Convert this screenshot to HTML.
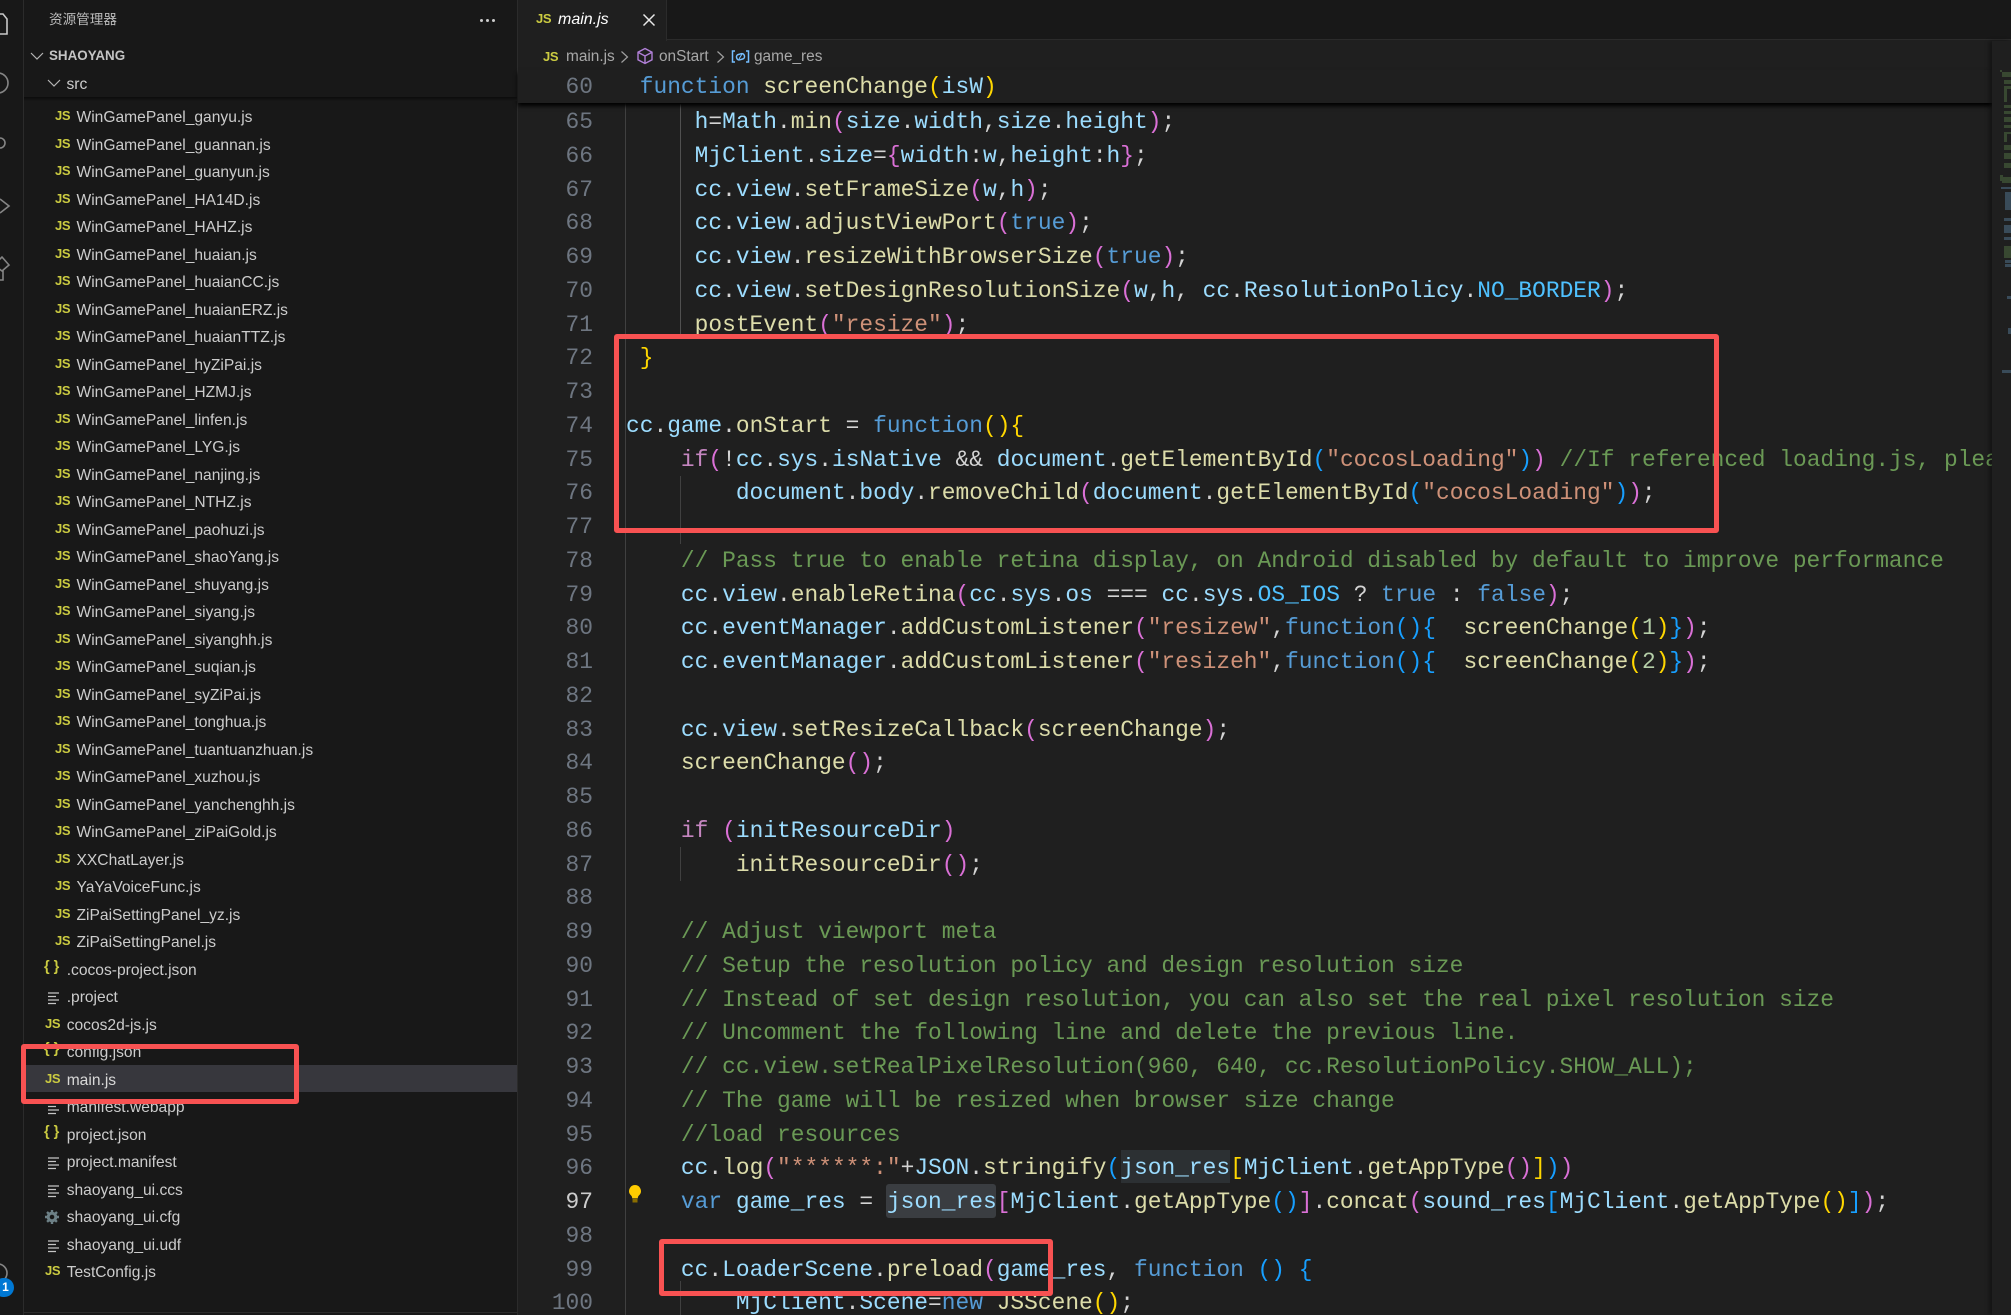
<!DOCTYPE html>
<html><head><meta charset="utf-8"><style>
*{box-sizing:border-box}
html,body{margin:0;padding:0;background:#1f1f1f}
#r{position:relative;width:2011px;height:1315px;overflow:hidden;background:#1f1f1f;font-family:"Liberation Sans","Noto Sans CJK SC",sans-serif}
.a{position:absolute}
#act{left:0;top:0;width:24px;height:1315px;background:#181818;border-right:1px solid #2b2b2b}
#side{left:24px;top:0;width:494px;height:1315px;background:#181818;border-right:1px solid #2b2b2b;overflow:hidden}
#list{left:0;top:97px;width:493px;height:1215px;overflow:hidden}
#rows{position:absolute;left:0;top:-20.2px;width:100%}
.w{position:relative;height:27.5px;line-height:27.5px;font-size:15.6px;color:#cccccc;white-space:pre;padding-left:52.5px}
.w.t{padding-left:42.7px}
.w b{position:absolute;left:31px;top:-2px;font-size:13px;color:#cbcb41;font-weight:bold;letter-spacing:-.3px}
.w.t b{left:21px}
.w.t b.br{left:20px;top:-3px;font-size:14.5px;letter-spacing:0}
.w svg{position:absolute;left:23px;top:6px}
#sel{left:0;top:1065px;width:493px;height:27px;background:#37373d}
#code{left:626px;top:106px;width:1366px;height:1209px;overflow:hidden;font-family:"Liberation Mono",monospace;font-size:22.88px;line-height:33.75px;color:#d4d4d4}
#code div{height:33.75px;white-space:pre}
#nums{left:540px;top:106px;width:53px;font-family:"Liberation Mono",monospace;font-size:22.88px;line-height:33.75px;color:#6e7681;text-align:right}
#nums div{height:33.75px}
.v{color:#9cdcfe}.f{color:#dcdcaa}.k{color:#569cd6}.c{color:#c586c0}.s{color:#ce9178}.g{color:#6a9955}.y{color:#ffd700}.p{color:#da70d6}.b{color:#179fff}.n{color:#4fc1ff}.m{color:#b5cea8}
.gd{position:absolute;width:1px;background:#404040}
.box{position:absolute;border:5px solid #f85252;border-radius:3px}
</style></head><body><div id="r">

<div id="side" class="a">
<div class="a" id="sel" style="left:0"></div>
<div class="a" style="left:25px;top:10px;font-size:13.6px;line-height:20px;color:#bbbbbb">资源管理器</div>
<div class="a" style="left:456px;top:19px;width:3px;height:3px;border-radius:2px;background:#ccc;box-shadow:6px 0 0 #ccc,12px 0 0 #ccc"></div>
<svg class="a" style="left:5px;top:48px" width="16" height="16" viewBox="0 0 16 16"><path d="M2 5l6 6 6-6" fill="none" stroke="#b5b5b5" stroke-width="1.2"/></svg>
<div class="a" style="left:25px;top:46px;font-size:13.4px;line-height:20px;font-weight:bold;color:#c4c4c4">SHAOYANG</div>
<svg class="a" style="left:22px;top:75px" width="16" height="16" viewBox="0 0 16 16"><path d="M2 5l6 6 6-6" fill="none" stroke="#b5b5b5" stroke-width="1.2"/></svg>
<div class="a" style="left:42.5px;top:74px;font-size:15.6px;line-height:22px;color:#cccccc">src</div>
<div class="a" style="left:0;top:97px;width:493px;height:4px;background:linear-gradient(#0c0c0c,#181818);z-index:3"></div>
<div class="a" id="list"><div id="rows">
<div class="w"><b>JS</b>WinGamePanel_fengyang.js</div>
<div class="w"><b>JS</b>WinGamePanel_ganyu.js</div>
<div class="w"><b>JS</b>WinGamePanel_guannan.js</div>
<div class="w"><b>JS</b>WinGamePanel_guanyun.js</div>
<div class="w"><b>JS</b>WinGamePanel_HA14D.js</div>
<div class="w"><b>JS</b>WinGamePanel_HAHZ.js</div>
<div class="w"><b>JS</b>WinGamePanel_huaian.js</div>
<div class="w"><b>JS</b>WinGamePanel_huaianCC.js</div>
<div class="w"><b>JS</b>WinGamePanel_huaianERZ.js</div>
<div class="w"><b>JS</b>WinGamePanel_huaianTTZ.js</div>
<div class="w"><b>JS</b>WinGamePanel_hyZiPai.js</div>
<div class="w"><b>JS</b>WinGamePanel_HZMJ.js</div>
<div class="w"><b>JS</b>WinGamePanel_linfen.js</div>
<div class="w"><b>JS</b>WinGamePanel_LYG.js</div>
<div class="w"><b>JS</b>WinGamePanel_nanjing.js</div>
<div class="w"><b>JS</b>WinGamePanel_NTHZ.js</div>
<div class="w"><b>JS</b>WinGamePanel_paohuzi.js</div>
<div class="w"><b>JS</b>WinGamePanel_shaoYang.js</div>
<div class="w"><b>JS</b>WinGamePanel_shuyang.js</div>
<div class="w"><b>JS</b>WinGamePanel_siyang.js</div>
<div class="w"><b>JS</b>WinGamePanel_siyanghh.js</div>
<div class="w"><b>JS</b>WinGamePanel_suqian.js</div>
<div class="w"><b>JS</b>WinGamePanel_syZiPai.js</div>
<div class="w"><b>JS</b>WinGamePanel_tonghua.js</div>
<div class="w"><b>JS</b>WinGamePanel_tuantuanzhuan.js</div>
<div class="w"><b>JS</b>WinGamePanel_xuzhou.js</div>
<div class="w"><b>JS</b>WinGamePanel_yanchenghh.js</div>
<div class="w"><b>JS</b>WinGamePanel_ziPaiGold.js</div>
<div class="w"><b>JS</b>XXChatLayer.js</div>
<div class="w"><b>JS</b>YaYaVoiceFunc.js</div>
<div class="w"><b>JS</b>ZiPaiSettingPanel_yz.js</div>
<div class="w"><b>JS</b>ZiPaiSettingPanel.js</div>
<div class="w t"><b class="br">{ }</b>.cocos-project.json</div>
<div class="w t"><svg width="16" height="16" viewBox="0 0 16 16"><path d="M1 3h11M1 6.5h8M1 10h11M1 13.5h8" stroke="#c5c5c5" stroke-width="1.3"/></svg>.project</div>
<div class="w t"><b>JS</b>cocos2d-js.js</div>
<div class="w t"><b class="br">{ }</b>config.json</div>
<div class="w t" style="color:#d8d8d8"><b>JS</b>main.js</div>
<div class="w t"><svg width="16" height="16" viewBox="0 0 16 16"><path d="M1 3h11M1 6.5h8M1 10h11M1 13.5h8" stroke="#c5c5c5" stroke-width="1.3"/></svg>manifest.webapp</div>
<div class="w t"><b class="br">{ }</b>project.json</div>
<div class="w t"><svg width="16" height="16" viewBox="0 0 16 16"><path d="M1 3h11M1 6.5h8M1 10h11M1 13.5h8" stroke="#c5c5c5" stroke-width="1.3"/></svg>project.manifest</div>
<div class="w t"><svg width="16" height="16" viewBox="0 0 16 16"><path d="M1 3h11M1 6.5h8M1 10h11M1 13.5h8" stroke="#c5c5c5" stroke-width="1.3"/></svg>shaoyang_ui.ccs</div>
<div class="w t"><svg style="left:19.5px;top:5px" width="16" height="16" viewBox="0 0 16 16"><circle cx="8" cy="8" r="3.8" fill="none" stroke="#6d8086" stroke-width="3"/><path d="M8 1v14M1 8h14M3 3l10 10M13 3L3 13" stroke="#6d8086" stroke-width="2.4" stroke-dasharray="2.6 8.8"/></svg>shaoyang_ui.cfg</div>
<div class="w t"><svg width="16" height="16" viewBox="0 0 16 16"><path d="M1 3h11M1 6.5h8M1 10h11M1 13.5h8" stroke="#c5c5c5" stroke-width="1.3"/></svg>shaoyang_ui.udf</div>
<div class="w t"><b>JS</b>TestConfig.js</div>
</div></div>
<div class="a" style="left:0;top:1312px;width:493px;height:1px;background:#2b2b2b"></div>
</div>

<div id="act" class="a">
<svg width="24" height="1315" style="position:absolute;left:0;top:0" fill="none" stroke="#858585" stroke-width="1.6">
<path d="M-8 14h11l4 5v15H-8z" stroke="#c8c8c8"/><circle cx="-2" cy="83" r="10"/><circle cx="0" cy="143" r="5"/><path d="M0 199l9 7-9 7"/><path d="M-6 265l8-8 7 8-7 6zM3 270v10h-9"/><circle cx="-2" cy="1273" r="9"/>
</svg>
<div class="a" style="left:-6px;top:1278px;width:20px;height:19px;border-radius:10px;background:#0078d4;color:#fff;font-size:12px;font-weight:bold;line-height:19px;text-align:center;padding-left:3px">1</div>
</div>

<div class="a" style="left:518px;top:0;width:1493px;height:40px;background:#181818;border-bottom:1px solid #2b2b2b"></div>
<div class="a" style="left:518px;top:0;width:149px;height:41px;background:#1f1f1f;border-right:1px solid #2b2b2b"></div>
<div class="a" style="left:536px;top:11px;font-size:13px;font-weight:bold;color:#cbcb41;line-height:16px;letter-spacing:-.3px">JS</div>
<div class="a" style="left:558px;top:9px;font-size:16px;font-style:italic;color:#ffffff;line-height:22px">main.js</div>
<svg class="a" style="left:642px;top:13px" width="14" height="14" viewBox="0 0 14 14"><path d="M1.500 1.500l11 11M12.500 1.500l-11 11" stroke="#e8e8e8" stroke-width="1.5"/></svg>

<div class="a" style="left:543px;top:49px;font-size:13px;font-weight:bold;color:#cbcb41;line-height:16px;letter-spacing:-.3px">JS</div>
<div class="a" style="left:566px;top:47px;font-size:15.4px;color:#a8a8a8;line-height:20px">main.js</div>
<svg class="a" style="left:620px;top:49px" width="10" height="16" viewBox="0 0 10 16"><path d="M1.500 2.500l6 5.500-6 5.500" fill="none" stroke="#a0a0a0" stroke-width="1.2"/></svg>
<svg class="a" style="left:636px;top:47px" width="18" height="18" viewBox="0 0 18 18" fill="none" stroke="#b180d7" stroke-width="1.4"><path d="M9 1.500l7 3.700v7.600l-7 3.700-7-3.700V5.200zM2 5.200L9 9l7-3.800M9 9v7.500"/></svg>
<div class="a" style="left:659px;top:47px;font-size:15.4px;color:#a8a8a8;line-height:20px">onStart</div>
<svg class="a" style="left:716px;top:49px" width="10" height="16" viewBox="0 0 10 16"><path d="M1.500 2.500l6 5.500-6 5.500" fill="none" stroke="#a0a0a0" stroke-width="1.2"/></svg>
<svg class="a" style="left:731px;top:49px" width="19" height="16" viewBox="0 0 19 16" fill="none" stroke="#75beff" stroke-width="1.5"><path d="M4 2H1.500v11H4M15 2h2.500v11H15"/><rect x="5.500" y="5" width="8" height="5.500" rx="2.500" transform="rotate(-15 9.500 7.700)"/><path d="M8 10l3-5" stroke-width="1.100"/></svg>
<div class="a" style="left:754px;top:47px;font-size:15.4px;color:#a8a8a8;line-height:20px">game_res</div>

<div class="gd" style="left:625px;top:103px;height:1212px"></div>
<div class="gd" style="left:680px;top:104px;height:234px;background:#505050"></div>
<div class="gd" style="left:680px;top:476px;height:68px"></div>
<div class="gd" style="left:680px;top:847px;height:34px"></div>
<div class="gd" style="left:680px;top:1281px;height:34px"></div>

<div class="a" style="left:1121px;top:1150px;width:109px;height:33px;background:#2c3033"></div>
<div class="a" style="left:886px;top:1184px;width:110px;height:34px;background:#3a3d41;border-radius:3px"></div>

<div id="nums" class="a">
<div>65</div><div>66</div><div>67</div><div>68</div><div>69</div><div>70</div><div>71</div><div>72</div><div>73</div><div>74</div><div>75</div><div>76</div><div>77</div><div>78</div><div>79</div><div>80</div><div>81</div><div>82</div><div>83</div><div>84</div><div>85</div><div>86</div><div>87</div><div>88</div><div>89</div><div>90</div><div>91</div><div>92</div><div>93</div><div>94</div><div>95</div><div>96</div><div style="color:#cccccc">97</div><div>98</div><div>99</div><div>100</div>
</div>

<div id="code" class="a">
<div>     <span class="v">h</span>=<span class="v">Math</span>.<span class="f">min</span><span class="p">(</span><span class="v">size</span>.<span class="v">width</span>,<span class="v">size</span>.<span class="v">height</span><span class="p">)</span>;</div>
<div>     <span class="v">MjClient</span>.<span class="v">size</span>=<span class="p">{</span><span class="v">width</span>:<span class="v">w</span>,<span class="v">height</span>:<span class="v">h</span><span class="p">}</span>;</div>
<div>     <span class="v">cc</span>.<span class="v">view</span>.<span class="f">setFrameSize</span><span class="p">(</span><span class="v">w</span>,<span class="v">h</span><span class="p">)</span>;</div>
<div>     <span class="v">cc</span>.<span class="v">view</span>.<span class="f">adjustViewPort</span><span class="p">(</span><span class="k">true</span><span class="p">)</span>;</div>
<div>     <span class="v">cc</span>.<span class="v">view</span>.<span class="f">resizeWithBrowserSize</span><span class="p">(</span><span class="k">true</span><span class="p">)</span>;</div>
<div>     <span class="v">cc</span>.<span class="v">view</span>.<span class="f">setDesignResolutionSize</span><span class="p">(</span><span class="v">w</span>,<span class="v">h</span>, <span class="v">cc</span>.<span class="v">ResolutionPolicy</span>.<span class="n">NO_BORDER</span><span class="p">)</span>;</div>
<div>     <span class="f">postEvent</span><span class="p">(</span><span class="s">"resize"</span><span class="p">)</span>;</div>
<div> <span class="y">}</span></div>
<div> </div>
<div><span class="v">cc</span>.<span class="v">game</span>.<span class="f">onStart</span> = <span class="k">function</span><span class="y">(){</span></div>
<div>    <span class="c">if</span><span class="p">(</span>!<span class="v">cc</span>.<span class="v">sys</span>.<span class="v">isNative</span> &amp;&amp; <span class="v">document</span>.<span class="f">getElementById</span><span class="b">(</span><span class="s">"cocosLoading"</span><span class="b">)</span><span class="p">)</span> <span class="g">//If referenced loading.js, please remove it</span></div>
<div>        <span class="v">document</span>.<span class="v">body</span>.<span class="f">removeChild</span><span class="p">(</span><span class="v">document</span>.<span class="f">getElementById</span><span class="b">(</span><span class="s">"cocosLoading"</span><span class="b">)</span><span class="p">)</span>;</div>
<div> </div>
<div>    <span class="g">// Pass true to enable retina display, on Android disabled by default to improve performance</span></div>
<div>    <span class="v">cc</span>.<span class="v">view</span>.<span class="f">enableRetina</span><span class="p">(</span><span class="v">cc</span>.<span class="v">sys</span>.<span class="v">os</span> === <span class="v">cc</span>.<span class="v">sys</span>.<span class="n">OS_IOS</span> ? <span class="k">true</span> : <span class="k">false</span><span class="p">)</span>;</div>
<div>    <span class="v">cc</span>.<span class="v">eventManager</span>.<span class="f">addCustomListener</span><span class="p">(</span><span class="s">"resizew"</span>,<span class="k">function</span><span class="b">(){</span>  <span class="f">screenChange</span><span class="y">(</span><span class="m">1</span><span class="y">)</span><span class="b">}</span><span class="p">)</span>;</div>
<div>    <span class="v">cc</span>.<span class="v">eventManager</span>.<span class="f">addCustomListener</span><span class="p">(</span><span class="s">"resizeh"</span>,<span class="k">function</span><span class="b">(){</span>  <span class="f">screenChange</span><span class="y">(</span><span class="m">2</span><span class="y">)</span><span class="b">}</span><span class="p">)</span>;</div>
<div> </div>
<div>    <span class="v">cc</span>.<span class="v">view</span>.<span class="f">setResizeCallback</span><span class="p">(</span><span class="f">screenChange</span><span class="p">)</span>;</div>
<div>    <span class="f">screenChange</span><span class="p">()</span>;</div>
<div> </div>
<div>    <span class="c">if</span> <span class="p">(</span><span class="v">initResourceDir</span><span class="p">)</span></div>
<div>        <span class="f">initResourceDir</span><span class="p">()</span>;</div>
<div> </div>
<div>    <span class="g">// Adjust viewport meta</span></div>
<div>    <span class="g">// Setup the resolution policy and design resolution size</span></div>
<div>    <span class="g">// Instead of set design resolution, you can also set the real pixel resolution size</span></div>
<div>    <span class="g">// Uncomment the following line and delete the previous line.</span></div>
<div>    <span class="g">// cc.view.setRealPixelResolution(960, 640, cc.ResolutionPolicy.SHOW_ALL);</span></div>
<div>    <span class="g">// The game will be resized when browser size change</span></div>
<div>    <span class="g">//load resources</span></div>
<div>    <span class="v">cc</span>.<span class="f">log</span><span class="p">(</span><span class="s">"******:"</span>+<span class="v">JSON</span>.<span class="f">stringify</span><span class="b">(</span><span class="v">json_res</span><span class="y">[</span><span class="v">MjClient</span>.<span class="f">getAppType</span><span class="p">()</span><span class="y">]</span><span class="b">)</span><span class="p">)</span></div>
<div>    <span class="k">var</span> <span class="v">game_res</span> = <span class="v">json_res</span><span class="p">[</span><span class="v">MjClient</span>.<span class="f">getAppType</span><span class="b">()</span><span class="p">]</span>.<span class="f">concat</span><span class="p">(</span><span class="v">sound_res</span><span class="b">[</span><span class="v">MjClient</span>.<span class="f">getAppType</span><span class="y">()</span><span class="b">]</span><span class="p">)</span>;</div>
<div> </div>
<div>    <span class="v">cc</span>.<span class="v">LoaderScene</span>.<span class="f">preload</span><span class="p">(</span><span class="v">game_res</span>, <span class="k">function</span> <span class="b">()</span> <span class="b">{</span></div>
<div>        <span class="v">MjClient</span>.<span class="v">Scene</span>=<span class="k">new</span> <span class="f">JSScene</span><span class="y">()</span>;</div>
</div>

<div class="a" style="left:518px;top:70px;width:1474px;height:33px;background:#1f1f1f;box-shadow:0 3px 4px #000"></div>
<div class="a" style="left:540px;top:70.5px;width:53px;font-family:'Liberation Mono',monospace;font-size:22.88px;line-height:33.75px;color:#6e7681;text-align:right">60</div>
<div class="a" style="left:626px;top:70.5px;font-family:'Liberation Mono',monospace;font-size:22.88px;line-height:33.75px;color:#d4d4d4;white-space:pre"> <span class="k">function</span> <span class="f">screenChange</span><span class="y">(</span><span class="v">isW</span><span class="y">)</span></div>

<svg class="a" style="left:628px;top:1184px" width="14" height="20" viewBox="0 0 14 20"><path d="M7 1a6 6 0 0 0-4 10.400c1 1 1.200 2 1.200 3h5.600c0-1 .2-2 1.200-3A6 6 0 0 0 7 1z" fill="#ffcc00"/><rect x="4.500" y="15" width="5" height="3.500" fill="#8a6d00"/></svg>

<div class="a" style="left:1992px;top:41px;width:19px;height:1274px;background:#1f1f1f;box-shadow:-3px 0 4px rgba(0,0,0,.35)"></div>
<svg class="a" style="left:1992px;top:60px;opacity:.55" width="19" height="320">
<g fill="#4d6b40"><rect x="8" y="10" width="2" height="2"/><rect x="10" y="12" width="9" height="5"/><rect x="12" y="20" width="7" height="4"/><rect x="12" y="26" width="3" height="16"/><rect x="15" y="26" width="4" height="3"/><rect x="12" y="45" width="7" height="3"/><rect x="12" y="51" width="7" height="3"/><rect x="12" y="57" width="7" height="5"/><rect x="12" y="65" width="7" height="3"/><rect x="12" y="72" width="3" height="10"/><rect x="15" y="72" width="4" height="2"/><rect x="12" y="85" width="7" height="5"/><rect x="12" y="93" width="7" height="6"/><rect x="12" y="103" width="7" height="5"/><rect x="8" y="115" width="3" height="6"/><rect x="10" y="117" width="9" height="6"/></g>
<g fill="#4f7089"><rect x="9" y="127" width="10" height="2"/><rect x="13" y="132" width="6" height="18"/><rect x="12" y="158" width="7" height="3"/><rect x="12" y="165" width="7" height="8"/><rect x="12" y="177" width="7" height="3"/><rect x="13" y="200" width="6" height="3"/><rect x="13" y="204" width="6" height="3"/><rect x="15" y="236" width="4" height="3"/><rect x="16" y="268" width="3" height="6"/><rect x="10" y="310" width="9" height="3"/></g>
<g fill="#4d6b40"><rect x="12" y="186" width="7" height="12"/></g>
</svg>

<div class="box" style="left:21px;top:1044px;width:278px;height:60px"></div>
<div class="box" style="left:614px;top:334px;width:1105px;height:199px"></div>
<div class="box" style="left:659px;top:1239px;width:394px;height:57px"></div>

</div></body></html>
